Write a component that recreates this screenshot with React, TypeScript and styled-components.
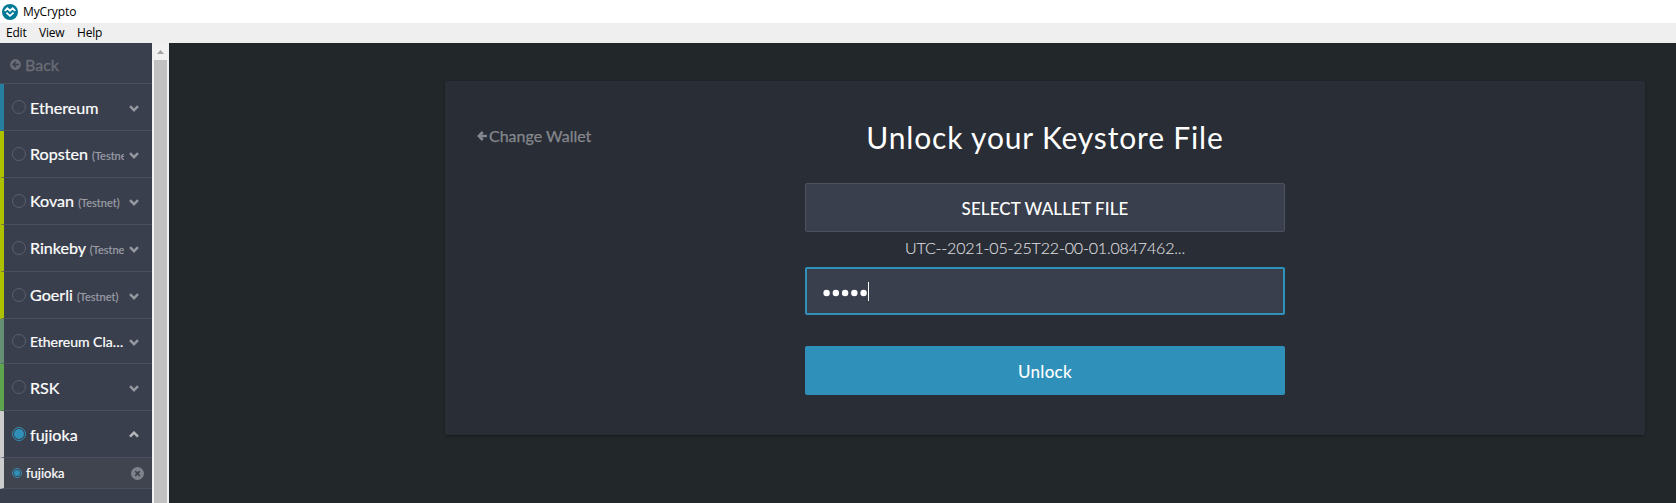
import React from "react";
import styled, { createGlobalStyle } from "styled-components";

const Global = createGlobalStyle`
  *, *::before, *::after { box-sizing: border-box; }
  body { margin: 0; background: #22272a; font-family: Lato, sans-serif; overflow: hidden; }
`;

const Window = styled.div`
  display: flex;
  flex-direction: column;
  height: 503px;
`;

const TitleBar = styled.header`
  display: flex;
  align-items: center;
  gap: 5px;
  height: 23px;
  padding-left: 2px;
  background: #fff;
  color: #000;
  font: 12px/23px "Open Sans", sans-serif;
`;

const AppName = styled.span`
  display: inline-block;
  letter-spacing: -0.1px;
`;

const MenuBar = styled.nav`
  display: flex;
  gap: 13px;
  height: 20px;
  padding-left: 6px;
  background: #efefef;
  color: #000;
  font: 12px/20px "Open Sans", sans-serif;
`;

const MenuItem = styled.span<{ $width: number }>`
  width: ${(p) => p.$width}px;
  letter-spacing: -0.2px;
  white-space: nowrap;
`;

const Body = styled.div`
  display: flex;
  flex: 1;
  min-height: 0;
`;

const Sidebar = styled.aside`
  width: 152px;
  background: #3a3f4d;
  overflow: hidden;
`;

const BackRow = styled.div`
  display: flex;
  align-items: center;
  gap: 4px;
  height: 41px;
  padding: 2px 0 0 10px;
  border-bottom: 1px solid #4b505e;
  color: #6a6d77;
  font-size: 16px;
  -webkit-text-stroke: 0.3px #6a6d77;
`;

const NetworkRow = styled.div<{ $color: string; $height: number }>`
  display: flex;
  align-items: center;
  height: ${(p) => p.$height}px;
  padding: 0 13px 0 8px;
  border-left: 4px solid ${(p) => p.$color};
  border-bottom: 1px solid #4b505e;
`;

const Radio = styled.span<{ $on?: boolean; $size: number }>`
  flex: none;
  width: ${(p) => p.$size}px;
  height: ${(p) => p.$size}px;
  border: 1px solid ${(p) => (p.$on ? "#2f91b9" : "#5b5f6d")};
  border-radius: 50%;
  padding: 1px;
  background: ${(p) => (p.$on ? "#2f91b9" : "transparent")} content-box;
`;

const NetworkName = styled.span<{ $size: number }>`
  width: 94px;
  margin: 0 5px 0 4px;
  padding-top: 1px;
  overflow: hidden;
  color: #fff;
  font-size: ${(p) => p.$size}px;
  line-height: 24px;
  white-space: nowrap;
  text-overflow: ${(p) => (p.$size < 16 ? "ellipsis" : "clip")};
  -webkit-text-stroke: 0.2px currentColor;
`;

const Testnet = styled.small`
  color: #9b9ea6;
  font-size: 11px;
  -webkit-text-stroke: 0.2px #9b9ea6;
`;

const NodeRow = styled.div<{ $color: string }>`
  display: flex;
  align-items: center;
  height: 31px;
  padding: 0 8px 0 8px;
  border-left: 4px solid ${(p) => p.$color};
  border-bottom: 1px solid #4b505e;
  background: #3f444f;
`;

const NodeName = styled.span`
  flex: 1;
  margin-left: 4px;
  color: #fff;
  font-size: 13px;
  -webkit-text-stroke: 0.2px #fff;
`;

const ScrollTrack = styled.div`
  display: flex;
  flex-direction: column;
  align-items: center;
  width: 17px;
  background: #f1f1f1;
`;

const ScrollArrow = styled.div`
  display: flex;
  align-items: center;
  height: 17px;
`;

const ScrollThumb = styled.div`
  flex: 1;
  width: 13px;
  background: #c1c1c1;
`;

const Main = styled.main`
  flex: 1;
  padding: 38px 31px 0 276px;
  background: #22272a;
`;

const Card = styled.section`
  display: grid;
  grid-template-columns: 360px 480px 360px;
  height: 354px;
  border-radius: 2px;
  background: #292d36;
  box-shadow: 0 1px 3px rgba(0, 0, 0, 0.35);
`;

const ChangeWallet = styled.a`
  display: flex;
  align-items: center;
  gap: 2px;
  height: 24px;
  margin: 42px 0 0 32px;
  color: #85878c;
  font-size: 16px;
  -webkit-text-stroke: 0.25px #85878c;

  svg {
    margin-top: 1px;
  }
`;

const Form = styled.div`
  display: flex;
  flex-direction: column;
`;

const Heading = styled.h2`
  margin: 36px 0 26px;
  color: #fff;
  font-size: 30px;
  font-weight: 400;
  line-height: 40px;
  letter-spacing: 0.83px;
  text-align: center;
  white-space: nowrap;
`;

const FileButton = styled.button`
  height: 49px;
  padding: 1px 0 0;
  border: 1px solid #4d5160;
  border-radius: 2px;
  background: #3a3f4d;
  color: #fff;
  font: 500 17px Lato, sans-serif;
  letter-spacing: 0.1px;
`;

const FileName = styled.div`
  height: 35px;
  color: #dcdcde;
  font-size: 16px;
  font-weight: 300;
  line-height: 31px;
  letter-spacing: -0.16px;
  text-align: center;
  -webkit-text-stroke: 0.15px #dcdcde;
`;

const PasswordField = styled.div`
  display: flex;
  align-items: center;
  height: 48px;
  padding-left: 16px;
  border: 2px solid #2f91b9;
  border-radius: 2px;
  background: #3a3f4d;
`;

const DotsSvg = styled.svg`
  margin-top: 4px;
`;

const Caret = styled.i`
  width: 1px;
  height: 19px;
  margin-top: 1px;
  background: #fff;
`;

const UnlockButton = styled.button`
  height: 49px;
  margin-top: 31px;
  padding: 2px 0 0;
  border: 0;
  border-radius: 2px;
  background: #2f91b9;
  color: #fff;
  font: 500 17px Lato, sans-serif;
  letter-spacing: 0.25px;
`;

const Logo = () => (
  <svg width="16" height="16" viewBox="0 0 16 16">
    <circle cx="8" cy="8" r="8" fill="#007896" />
    <path d="M2.8 6.9 5.4 4.3 8 6.7l2.6-2.4 2.6 2.6" fill="none" stroke="#fff" strokeWidth="1.9" />
    <path d="M4.4 8.6 8 11.9l3.6-3.3" fill="none" stroke="#fff" strokeWidth="1.8" />
  </svg>
);

const ChevronSvg = styled.svg`
  flex: none;
  margin-top: 1px;
`;

const Chevron = ({ up }: { up?: boolean }) => (
  <ChevronSvg width="10" height="8" viewBox="0 0 10 8">
    <path
      d={up ? "M1 5.6 5 1.6l4 4" : "M1 2.2l4 4 4-4"}
      fill="none"
      stroke={up ? "#b5b7bc" : "#95989f"}
      strokeWidth="2.4"
    />
  </ChevronSvg>
);

const BackIcon = () => (
  <svg width="11" height="11" viewBox="0 0 11 11">
    <circle cx="5.5" cy="5.5" r="5.4" fill="#6a6d77" />
    <path d="M9 5.5H3.4M5.9 2.7 3.1 5.5l2.8 2.8" fill="none" stroke="#3a3f4d" strokeWidth="1.5" />
  </svg>
);

const ArrowLeft = () => (
  <svg width="10" height="10" viewBox="0 0 10 10">
    <path d="M10 5H2M5.8 1 1.8 5l4 4" fill="none" stroke="#85878c" strokeWidth="2.5" />
  </svg>
);

const RemoveIcon = () => (
  <svg width="13" height="13" viewBox="0 0 13 13">
    <circle cx="6.5" cy="6.5" r="6.5" fill="#7f828a" />
    <path d="M4.2 4.2l4.6 4.6M8.8 4.2 4.2 8.8" stroke="#3f444f" strokeWidth="1.7" />
  </svg>
);

const PasswordDots = ({ count }: { count: number }) => (
  <DotsSvg width="45" height="8" viewBox="0 0 45 8">
    {Array.from({ length: count }, (_, i) => (
      <circle key={i} cx={3.6 + i * 9.25} cy="4" r="3.2" fill="#fff" />
    ))}
  </DotsSvg>
);

const networks = [
  { name: "Ethereum", color: "#277f9f" },
  { name: "Ropsten", color: "#adc101", testnet: true },
  { name: "Kovan", color: "#adc101", testnet: true },
  { name: "Rinkeby", color: "#adc101", testnet: true },
  { name: "Goerli", color: "#adc101", testnet: true },
  { name: "Ethereum Classic", color: "#669073", small: true },
  { name: "RSK", color: "#5fa54e" },
  { name: "fujioka", color: "#cccccc", open: true },
];

export default function App() {
  return (
    <Window>
      <Global />
      <TitleBar>
        <Logo />
        <AppName>MyCrypto</AppName>
      </TitleBar>
      <MenuBar>
        <MenuItem $width={20}>Edit</MenuItem>
        <MenuItem $width={25}>View</MenuItem>
        <MenuItem $width={25}>Help</MenuItem>
      </MenuBar>
      <Body>
        <Sidebar>
          <BackRow>
            <BackIcon />
            Back
          </BackRow>
          {networks.map((n) => (
            <NetworkRow key={n.name} $color={n.color} $height={n.small ? 45 : 47}>
              <Radio $size={14} $on={n.open} />
              <NetworkName $size={n.small ? 14 : 16.1}>
                {n.name} {n.testnet && <Testnet>(Testnet)</Testnet>}
              </NetworkName>
              <Chevron up={n.open} />
            </NetworkRow>
          ))}
          <NodeRow $color="#cccccc">
            <Radio $size={10} $on />
            <NodeName>fujioka</NodeName>
            <RemoveIcon />
          </NodeRow>
        </Sidebar>
        <ScrollTrack>
          <ScrollArrow>
            <svg width="7" height="4" viewBox="0 0 7 4">
              <path d="M0 4 3.5 0 7 4z" fill="#a3a3a3" />
            </svg>
          </ScrollArrow>
          <ScrollThumb />
        </ScrollTrack>
        <Main>
          <Card>
            <ChangeWallet>
              <ArrowLeft />
              Change Wallet
            </ChangeWallet>
            <Form>
              <Heading>Unlock your Keystore File</Heading>
              <FileButton>SELECT WALLET FILE</FileButton>
              <FileName>UTC--2021-05-25T22-00-01.0847462...</FileName>
              <PasswordField>
                <PasswordDots count={5} />
                <Caret />
              </PasswordField>
              <UnlockButton>Unlock</UnlockButton>
            </Form>
          </Card>
        </Main>
      </Body>
    </Window>
  );
}
